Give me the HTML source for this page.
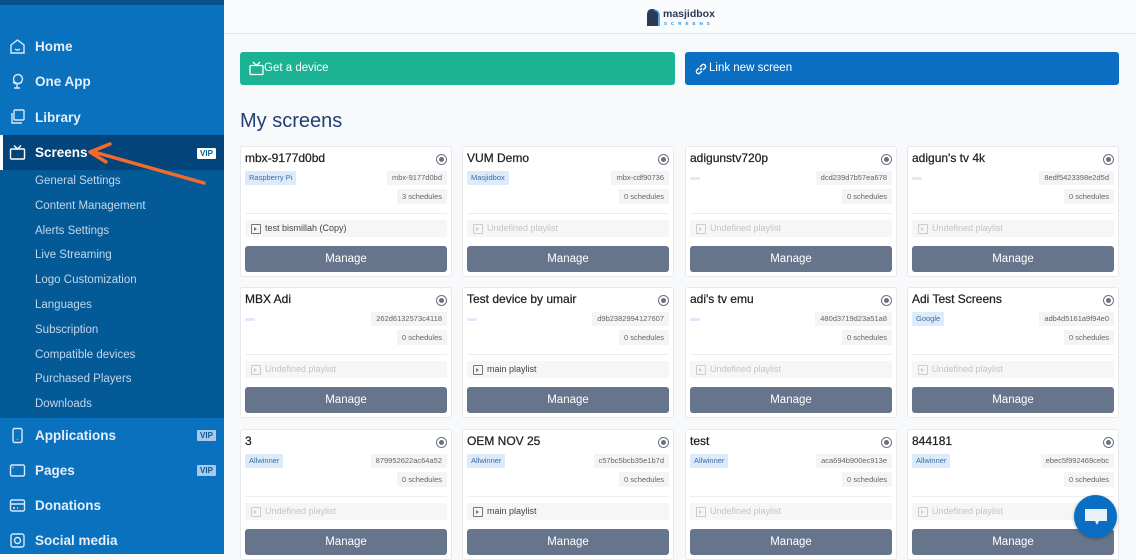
<!DOCTYPE html>
<html><head><meta charset="utf-8"><style>
*{box-sizing:border-box;margin:0;padding:0}
body{width:1136px;height:554px;overflow:hidden;background:#f8f9fa;font-family:"Liberation Sans","DejaVu Sans",sans-serif;position:relative}
.sb{position:absolute;left:0;top:0;width:224px;height:554px;background:#0a71be}
.sb .top{position:absolute;left:0;top:0;width:224px;height:5px;background:#07508a}
.sub{position:absolute;left:0;top:135px;width:224px;height:283px;background:#045a97}
.act{position:absolute;left:0;top:135px;width:224px;height:35px;background:#03457a}
.act:before{content:"";position:absolute;left:0;top:0;width:3px;height:35px;background:#fff}
.it{position:absolute;left:35px;color:#e4eef8;font-size:13.5px;font-weight:bold}
.ic{position:absolute;left:9px;width:17px;height:17px}
.si{position:absolute;left:35px;color:#c3d6ea;font-size:11.5px}
.vip{position:absolute;left:197px;width:19px;height:11px;background:#a9c9e6;color:#0a5a98;font-size:8px;font-weight:bold;text-align:center;line-height:11px;border-radius:1px}
.hdr{position:absolute;left:224px;top:0;width:912px;height:34px;border-bottom:1px solid #e5e7ea;background:#fafbfc}
.btn{position:absolute;top:52px;height:33px;border-radius:3px;color:#fff;font-size:11.5px;line-height:33px;padding-left:24px}
h1{position:absolute;left:240px;top:110px;font-size:20px;font-weight:normal;color:#213f73}
.c{position:absolute;width:212px;height:131px;background:#fff;border:1px solid #e6e8ec;border-radius:3px}
.c .t{position:absolute;left:4px;top:4px;font-size:12px;color:#222;-webkit-text-stroke:0.25px #222}
.c .r{position:absolute;right:4px;top:7px;width:11px;height:11px;border:1.5px solid #6a7280;border-radius:50%}
.c .r:after{content:"";position:absolute;left:1.5px;top:1.5px;width:5px;height:5px;border-radius:50%;background:#6a7280}
.b{position:absolute;left:4px;top:24px;height:14px;background:#dcebfa;color:#3c6aa0;font-size:7.5px;line-height:14px;padding:0 4px;border-radius:1px}
.b.e{width:10px;height:3px;top:30px;padding:0}
.id{position:absolute;right:4px;top:24px;height:14px;background:#f3f4f6;color:#666;font-size:7.5px;line-height:14px;padding:0 5px}
.sc{position:absolute;right:4px;top:42px;height:15px;background:#f3f4f6;color:#666;font-size:7.5px;line-height:15px;padding:0 5px}
.dv{position:absolute;left:4px;right:4px;top:66px;border-top:1px solid #eceef0}
.pl{position:absolute;left:4px;right:4px;top:73px;height:17px;background:#f6f6f7;font-size:9px;line-height:17px;padding-left:20px;color:#444}
.pl.u{color:#c2c4c8}
.pl:before{content:"";position:absolute;left:6px;top:4px;width:8px;height:8px;border:1px solid #777;border-radius:1px}
.pl:after{content:"";position:absolute;left:9px;top:6.5px;border-left:3px solid #777;border-top:2px solid transparent;border-bottom:2px solid transparent}
.pl.u:before{border-color:#ccc}.pl.u:after{border-left-color:#ccc}
.m{position:absolute;left:4px;right:4px;top:99px;height:26px;background:#67758c;border-radius:3px;color:#fff;font-size:11.5px;text-align:center;line-height:26px}
</style></head><body>
<div class="sb">
<div class="top"></div>
<div class="sub"></div><div class="act"></div>
<svg class="ic" style="top:38px" viewBox="0 0 17 17" fill="none" stroke="#dbe8f5" stroke-width="1.4"><path d="M2 7L8.5 2 15 7V15H2Z"/><path d="M6 11q2.5 2 5 0"/></svg>
<div class="it" style="top:39px">Home</div>
<svg class="ic" style="top:73px" viewBox="0 0 17 17" fill="none" stroke="#dbe8f5" stroke-width="1.4"><circle cx="9" cy="6" r="4.5"/><path d="M4 9q4 4 9 0M8 12v3M5 15h6"/></svg>
<div class="it" style="top:74px">One App</div>
<svg class="ic" style="top:108px" viewBox="0 0 17 17" fill="none" stroke="#dbe8f5" stroke-width="1.4"><rect x="5" y="2" width="10" height="10" rx="1"/><path d="M3 5v10h10"/></svg>
<div class="it" style="top:110px">Library</div>
<svg class="ic" style="top:144px" viewBox="0 0 17 17" fill="none" stroke="#fff" stroke-width="1.4"><rect x="1.5" y="5" width="14" height="10" rx="1"/><path d="M5 1.5l3.5 3.5 3.5-3.5"/></svg>
<div class="it" style="top:145px;color:#fff">Screens</div>
<div class="vip" style="top:148px;background:#fff">VIP</div>
<div class="si" style="top:175px">General Settings</div>
<div class="si" style="top:200px">Content Management</div>
<div class="si" style="top:225px">Alerts Settings</div>
<div class="si" style="top:249px">Live Streaming</div>
<div class="si" style="top:274px">Logo Customization</div>
<div class="si" style="top:299px">Languages</div>
<div class="si" style="top:324px">Subscription</div>
<div class="si" style="top:349px">Compatible devices</div>
<div class="si" style="top:373px">Purchased Players</div>
<div class="si" style="top:398px">Downloads</div>
<svg class="ic" style="top:427px" viewBox="0 0 17 17" fill="none" stroke="#dbe8f5" stroke-width="1.4"><rect x="4" y="1.5" width="9" height="14" rx="1.5"/><path d="M8.5 12.5v.5"/></svg>
<div class="it" style="top:428px">Applications</div><div class="vip" style="top:430px">VIP</div>
<svg class="ic" style="top:462px" viewBox="0 0 17 17" fill="none" stroke="#dbe8f5" stroke-width="1.4"><rect x="1.5" y="3" width="14" height="11" rx="1.5"/><path d="M3.5 5.5h1"/></svg>
<div class="it" style="top:463px">Pages</div><div class="vip" style="top:465px">VIP</div>
<svg class="ic" style="top:497px" viewBox="0 0 17 17" fill="none" stroke="#dbe8f5" stroke-width="1.4"><rect x="1.5" y="3" width="14" height="11" rx="1.5"/><path d="M1.5 7h14M4 11h2M8 11h1"/></svg>
<div class="it" style="top:498px">Donations</div>
<svg class="ic" style="top:532px" viewBox="0 0 17 17" fill="none" stroke="#dbe8f5" stroke-width="1.4"><rect x="2" y="2" width="13" height="13" rx="2"/><circle cx="8.5" cy="8.5" r="3"/></svg>
<div class="it" style="top:533px">Social media</div>
<svg style="position:absolute;left:80px;top:140px" width="130" height="50" viewBox="0 0 130 50"><path d="M124 43L14 12" stroke="#f26b2a" stroke-width="3.5" stroke-linecap="round"/><path d="M30 4L10 12 26 22" stroke="#f26b2a" stroke-width="3.5" fill="none" stroke-linecap="round" stroke-linejoin="round"/></svg>
</div>
<div class="hdr">
<svg style="position:absolute;left:422px;top:8px" width="14" height="18" viewBox="0 0 14 18"><path d="M1 18V7Q1 1 6 1Q12 1 12 7V18Z" fill="#2b3a55"/><path d="M8 2Q13 3 13 8V18" stroke="#2a8fd8" stroke-width="1.5" fill="none"/></svg>
<div style="position:absolute;left:439px;top:8px;font-size:10.5px;font-weight:bold;color:#2b3a55">masjidbox</div>
<div style="position:absolute;left:440px;top:21px;font-size:4.5px;letter-spacing:4px;color:#2a8fd8;font-weight:bold">SCREENS</div>
</div>
<div class="btn" style="left:240px;width:435px;background:#1bb394">
<svg style="position:absolute;left:9px;top:9px" width="15" height="15" viewBox="0 0 15 15" fill="none" stroke="#fff" stroke-width="1.3"><rect x="1" y="4.5" width="13" height="9" rx="1"/><path d="M4 1l3.5 3.5 3.5-3.5"/></svg>Get a device</div>
<div class="btn" style="left:685px;width:434px;background:#0a6fc2">
<svg style="position:absolute;left:9px;top:10px" width="14" height="14" viewBox="0 0 14 14" fill="none" stroke="#fff" stroke-width="1.4"><path d="M6 8l2-2M5 6L3 8a2 2 0 003 3l2-2M9 8l2-2a2 2 0 00-3-3L6 5"/></svg>Link new screen</div>
<h1>My screens</h1>

<div class="c" style="left:240px;top:146px"><div class="t">mbx-9177d0bd</div><div class="r"></div><div class="b">Raspberry Pi</div><div class="id">mbx-9177d0bd</div><div class="sc">3 schedules</div><div class="dv"></div><div class="pl">test bismillah (Copy)</div><div class="m">Manage</div></div>
<div class="c" style="left:462px;top:146px"><div class="t">VUM Demo</div><div class="r"></div><div class="b">Masjidbox</div><div class="id">mbx-cdf90736</div><div class="sc">0 schedules</div><div class="dv"></div><div class="pl u">Undefined playlist</div><div class="m">Manage</div></div>
<div class="c" style="left:685px;top:146px"><div class="t">adigunstv720p</div><div class="r"></div><div class="b e"></div><div class="id">dcd239d7b57ea678</div><div class="sc">0 schedules</div><div class="dv"></div><div class="pl u">Undefined playlist</div><div class="m">Manage</div></div>
<div class="c" style="left:907px;top:146px"><div class="t">adigun's tv 4k</div><div class="r"></div><div class="b e"></div><div class="id">8edf5423398e2d5d</div><div class="sc">0 schedules</div><div class="dv"></div><div class="pl u">Undefined playlist</div><div class="m">Manage</div></div>

<div class="c" style="left:240px;top:287px"><div class="t">MBX Adi</div><div class="r"></div><div class="b e"></div><div class="id">262d6132573c4118</div><div class="sc">0 schedules</div><div class="dv"></div><div class="pl u">Undefined playlist</div><div class="m">Manage</div></div>
<div class="c" style="left:462px;top:287px"><div class="t">Test device by umair</div><div class="r"></div><div class="b e"></div><div class="id">d9b2382994127607</div><div class="sc">0 schedules</div><div class="dv"></div><div class="pl">main playlist</div><div class="m">Manage</div></div>
<div class="c" style="left:685px;top:287px"><div class="t">adi's tv emu</div><div class="r"></div><div class="b e"></div><div class="id">480d3719d23a51a8</div><div class="sc">0 schedules</div><div class="dv"></div><div class="pl u">Undefined playlist</div><div class="m">Manage</div></div>
<div class="c" style="left:907px;top:287px"><div class="t">Adi Test Screens</div><div class="r"></div><div class="b">Google</div><div class="id">adb4d5161a9f94e0</div><div class="sc">0 schedules</div><div class="dv"></div><div class="pl u">Undefined playlist</div><div class="m">Manage</div></div>

<div class="c" style="left:240px;top:429px"><div class="t">3</div><div class="r"></div><div class="b">Allwinner</div><div class="id">879952622ac64a52</div><div class="sc">0 schedules</div><div class="dv"></div><div class="pl u">Undefined playlist</div><div class="m">Manage</div></div>
<div class="c" style="left:462px;top:429px"><div class="t">OEM NOV 25</div><div class="r"></div><div class="b">Allwinner</div><div class="id">c57bc5bcb35e1b7d</div><div class="sc">0 schedules</div><div class="dv"></div><div class="pl">main playlist</div><div class="m">Manage</div></div>
<div class="c" style="left:685px;top:429px"><div class="t">test</div><div class="r"></div><div class="b">Allwinner</div><div class="id">aca694b900ec913e</div><div class="sc">0 schedules</div><div class="dv"></div><div class="pl u">Undefined playlist</div><div class="m">Manage</div></div>
<div class="c" style="left:907px;top:429px"><div class="t">844181</div><div class="r"></div><div class="b">Allwinner</div><div class="id">ebec5f992469cebc</div><div class="sc">0 schedules</div><div class="dv"></div><div class="pl u">Undefined playlist</div><div class="m">Manage</div></div>

<div style="position:absolute;left:1074px;top:495px;width:43px;height:43px;border-radius:50%;background:#0a6fc2;box-shadow:0 1px 3px rgba(0,0,0,.3)">
<svg style="position:absolute;left:10px;top:12px" width="24" height="20" viewBox="0 0 24 20"><path d="M1 2h22v12H15l-2 4-2-4H1Z" fill="#e8f0f8"/></svg></div>
</body></html>
